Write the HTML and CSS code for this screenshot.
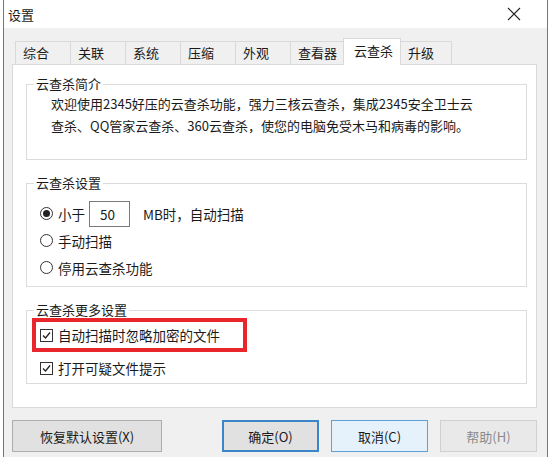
FILE: index.html
```html
<!DOCTYPE html>
<html lang="zh-CN">
<head>
    <meta charset="UTF-8">
    <title>设置</title>
    <link rel="stylesheet" href="styles.css">
</head>
<body>

    <div class="window">
        <div class="titlebar">
            <span class="title">设置</span>
            <svg class="close" width="14" height="14" viewBox="0 0 14 14">
                <path d="M1 1 L13 13 M13 1 L1 13" stroke="#222" stroke-width="1.1" fill="none"/>
            </svg>
        </div>

        <div class="tabs">
            <div class="tab">综合</div>
            <div class="tab">关联</div>
            <div class="tab">系统</div>
            <div class="tab">压缩</div>
            <div class="tab">外观</div>
            <div class="tab">查看器</div>
            <div class="tab active">云查杀</div>
            <div class="tab last">升级</div>
        </div>

        <div class="panel">
            <fieldset class="group intro">
                <legend>云查杀简介</legend>
                <p>欢迎使用2345好压的云查杀功能，强力三核云查杀，集成2345安全卫士云<br>查杀、QQ管家云查杀、360云查杀，使您的电脑免受木马和病毒的影响。</p>
            </fieldset>

            <fieldset class="group settings">
                <legend>云查杀设置</legend>
                <div class="row">
                    <span class="radio checked"></span>
                    <span>小于</span>
                    <span class="edit">50</span>
                    <span class="unit">MB时，自动扫描</span>
                </div>
                <div class="row">
                    <span class="radio"></span>
                    <span>手动扫描</span>
                </div>
                <div class="row">
                    <span class="radio"></span>
                    <span>停用云查杀功能</span>
                </div>
            </fieldset>

            <fieldset class="group more">
                <legend>云查杀更多设置</legend>
                <div class="row marked">
                    <span class="check">
                        <svg width="11" height="11" viewBox="0 0 11 11"><path d="M2 5.5 L4.5 8 L9 2.5" stroke="#222" stroke-width="1.3" fill="none"/></svg>
                    </span>
                    <span>自动扫描时忽略加密的文件</span>
                </div>
                <div class="row second">
                    <span class="check">
                        <svg width="11" height="11" viewBox="0 0 11 11"><path d="M2 5.5 L4.5 8 L9 2.5" stroke="#222" stroke-width="1.3" fill="none"/></svg>
                    </span>
                    <span>打开可疑文件提示</span>
                </div>
            </fieldset>
        </div>

        <div class="buttons">
            <button class="btn wide">恢复默认设置(X)</button>
            <button class="btn default">确定(O)</button>
            <button class="btn hover">取消(C)</button>
            <button class="btn faded">帮助(H)</button>
        </div>
    </div>

</body>
</html>
```

FILE: styles.css
```css
body {
    margin: 0;
    background: #ffffff;
    font-family: "Noto Sans CJK SC", "Noto Sans", sans-serif;
    color: #1a1a1a;
}

.window {
    margin-left: 3px;
    width: 545px;
    height: 457px;
    box-sizing: border-box;
    border-left: 1px solid #2a8ad8;
    border-right: 1px solid #2a8ad8;
    background: #f0f0f0;
    overflow: hidden;
}

.titlebar {
    height: 28px;
    background: #ffffff;
    display: flex;
    align-items: center;
    justify-content: space-between;
    padding: 0 26px 0 4px;
}

.title {
    font-size: 13px;
}

.tabs {
    display: flex;
    align-items: flex-end;
    height: 26px;
    margin-top: 10px;
    padding-left: 11px;
}

.tab {
    width: 55px;
    height: 23px;
    box-sizing: border-box;
    border: 1px solid #d9d9d9;
    border-bottom: none;
    border-right: none;
    padding-left: 7px;
    font-size: 13px;
    line-height: 21px;
    background: #f0f0f0;
}

.tab.active {
    width: 58px;
    height: 27px;
    margin: 0 0 -1px -2px;
    padding-left: 10px;
    background: #ffffff;
    border-right: 1px solid #d9d9d9;
    position: relative;
    line-height: 24px;
}

.tab.last {
    width: 51px;
    border-left: none;
    border-right: 1px solid #d9d9d9;
}

.panel {
    margin-left: 8px;
    width: 525px;
    height: 344px;
    box-sizing: border-box;
    background: #ffffff;
    border: 1px solid #d9d9d9;
    padding: 10px 9px 0 13px;
}

.group {
    margin: 0;
    border: 1px solid #dcdcdc;
    padding: 0 0 0 7px;
    min-width: 0;
}

.group legend {
    font-size: 13px;
    line-height: 18px;
    padding: 0 2px;
    margin: 0;
}

.intro {
    padding-bottom: 22px;
}

.intro p {
    margin: 0 0 0 17px;
    font-size: 13px;
    line-height: 22px;
    letter-spacing: 0;
    white-space: nowrap;
}

.settings {
    margin-top: 14px;
    padding-top: 8px;
    padding-bottom: 5px;
}

.more {
    margin-top: 14px;
    padding-bottom: 1px;
}

.row {
    display: flex;
    align-items: center;
    height: 27px;
    margin-left: 6px;
    font-size: 13.5px;
    gap: 5px;
}

.radio {
    width: 13px;
    height: 13px;
    box-sizing: border-box;
    border: 1px solid #333;
    border-radius: 50%;
    display: flex;
    align-items: center;
    justify-content: center;
}

.radio.checked::after {
    content: "";
    width: 7px;
    height: 7px;
    border-radius: 50%;
    background: #222;
}

.edit {
    width: 41px;
    height: 26px;
    box-sizing: border-box;
    border: 1px solid #7a7a7a;
    padding-left: 10px;
    line-height: 24px;
    margin-left: -1px;
}

.unit {
    margin-left: 8px;
}

.check {
    width: 13px;
    height: 13px;
    box-sizing: border-box;
    border: 1px solid #333;
    display: flex;
    align-items: center;
    justify-content: center;
}

.row.marked {
    width: 215px;
    height: 34px;
    box-sizing: border-box;
    border: 4px solid #e8262b;
    margin: -1px 0 0 -2px;
    padding-left: 4px;
}

.row.second {
    height: 28px;
    margin-top: 2px;
}

.buttons {
    display: flex;
    gap: 12px;
    margin: 12px 0 0 8px;
}

.btn {
    width: 97px;
    height: 32px;
    box-sizing: border-box;
    font-family: "Noto Sans CJK SC", "Noto Sans", sans-serif;
    font-size: 13px;
    color: #1a1a1a;
    background: #e1e1e1;
    border: 1px solid #adadad;
    padding: 0;
}

.btn.wide {
    width: 150px;
    margin-right: 48px;
}

.btn.default {
    border: 2px solid #3b86c8;
}

.btn.hover {
    background: #e5f1fb;
    border-color: #5aa2dc;
}

.btn.faded {
    background: #e9e9e9;
    border-color: #d0d0d0;
    color: #8a8a8a;
}
```
